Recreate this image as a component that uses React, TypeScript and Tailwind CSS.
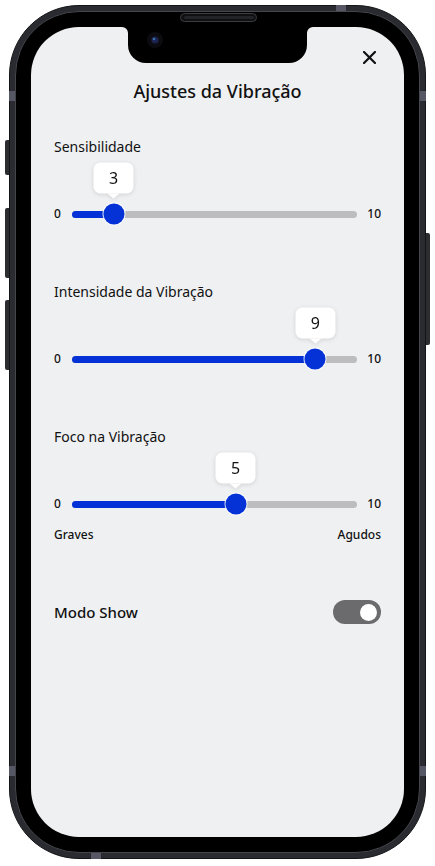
import React from "react";

type SliderItem = {
  label: string;
  value: number;
  pos: number;
  legend?: [string, string];
};

const sliders: SliderItem[] = [
  { label: "Sensibilidade", value: 3, pos: 0.146 },
  { label: "Intensidade da Vibração", value: 9, pos: 0.854 },
  { label: "Foco na Vibração", value: 5, pos: 0.574, legend: ["Graves", "Agudos"] },
];

function Slider({ item }: { item: SliderItem }) {
  const pct = `${item.pos * 100}%`;
  return (
    <div className="flex flex-col">
      <p className="text-[14px] leading-[20px] text-[#111]">{item.label}</p>
      <div className="mt-[46px] flex h-[22px] items-center">
        <span className="w-[18px] text-[12px] font-medium text-[#111]">0</span>
        <div className="relative flex h-[22px] flex-1 items-center">
          <div className="h-[7px] w-full rounded-full bg-[#bdbdbf]" />
          <div className="absolute left-0 h-[7px] rounded-full bg-[#0432d6]" style={{ width: pct }} />
          <div
            className="absolute top-1/2 h-[21px] w-[21px] -translate-x-1/2 -translate-y-1/2 rounded-full bg-[#0432d6] ring-1 ring-white/80"
            style={{ left: pct }}
          >
            <div className="absolute bottom-[31px] left-1/2 -translate-x-1/2 drop-shadow-[0_1px_2px_rgba(0,0,0,0.13)]">
              <div className="flex h-[31px] w-[40px] items-center justify-center rounded-[7px] bg-white pb-[1px] text-[16px] text-[#111]">
                {item.value}
              </div>
              <div className="absolute left-1/2 top-full h-0 w-0 -translate-x-1/2 border-l-[6px] border-r-[6px] border-t-[5px] border-l-transparent border-r-transparent border-t-white" />
            </div>
          </div>
        </div>
        <span className="w-[24px] text-right text-[12px] font-medium text-[#111]">10</span>
      </div>
      {item.legend && (
        <div className="mt-[12px] flex justify-between text-[12px] font-medium leading-[16px] text-[#111]">
          <span>{item.legend[0]}</span>
          <span>{item.legend[1]}</span>
        </div>
      )}
    </div>
  );
}

function Notch() {
  return (
    <svg className="absolute left-[91px] top-0" width="191" height="36" viewBox="0 0 191 36">
      <path
        d="M0 0 A6 6 0 0 1 6 6 V18 A18 18 0 0 0 24 36 H167 A18 18 0 0 0 185 18 V6 A6 6 0 0 1 191 0 Z"
        fill="#000"
      />
      <circle cx="33" cy="13" r="8" fill="#0c0c10" />
      <circle cx="33" cy="13" r="3.6" fill="#1b2350" />
      <circle cx="32" cy="12" r="1.3" fill="#3a6ea8" />
    </svg>
  );
}

export default function App() {
  return (
    <div className="relative h-[866px] w-[435px] overflow-hidden bg-white pl-[9px] pt-[5px] font-['Noto_Sans',sans-serif]">
      {/* side buttons */}
      <div className="absolute left-[5px] top-[140px] h-[35px] w-[4px] rounded-l-[2px] bg-[#2c2d31]" />
      <div className="absolute left-[5px] top-[208px] h-[70px] w-[4px] rounded-l-[2px] bg-[#2c2d31]" />
      <div className="absolute left-[5px] top-[300px] h-[70px] w-[4px] rounded-l-[2px] bg-[#2c2d31]" />
      <div className="absolute left-[426px] top-[233px] h-[112px] w-[4px] rounded-r-[2px] bg-[#2c2d31]" />

      <div className="relative h-[854px] w-[417px] rounded-[70px] border border-[#141517] bg-[#2a2b30] p-[5px]">
        {/* antenna lines */}
        <div className="absolute left-[-1px] top-[85px] h-[10px] w-[6px] bg-[#555764]" />
        <div className="absolute right-[-1px] top-[85px] h-[10px] w-[6px] bg-[#555764]" />
        <div className="absolute left-[-1px] top-[760px] h-[10px] w-[6px] bg-[#555764]" />
        <div className="absolute right-[-1px] top-[760px] h-[10px] w-[6px] bg-[#555764]" />
        <div className="absolute left-[326px] top-[-1px] h-[6px] w-[10px] bg-[#555764]" />
        <div className="absolute bottom-[-1px] left-[81px] h-[6px] w-[10px] bg-[#555764]" />

        <div className="h-full w-full rounded-[64px] border border-[#44464c] bg-black p-[15px]">
          <div className="relative h-full w-full overflow-hidden rounded-[48px] bg-[#eff0f2] px-[23px]">
            <Notch />
            <div className="flex justify-end pr-[5px] pt-[24px]">
              <svg width="13" height="13" viewBox="0 0 13 13">
                <path d="M1 1 L12 12 M12 1 L1 12" stroke="#111" strokeWidth="2.2" strokeLinecap="square" />
              </svg>
            </div>
            <h1 className="mt-[15px] text-center text-[18px] font-medium leading-[24px] text-[#111]">
              Ajustes da Vibração
            </h1>
            <div className="mt-[34px] flex flex-col gap-[57px]">
              {sliders.map((s) => (
                <Slider key={s.label} item={s} />
              ))}
              <div className="flex h-[24px] items-center justify-between">
                <span className="text-[15px] font-medium text-[#111]">Modo Show</span>
                <div className="flex h-[24px] w-[48px] items-center justify-end rounded-full bg-[#6b6b6d] pr-[4px]">
                  <div className="h-[17px] w-[17px] rounded-full bg-white" />
                </div>
              </div>
            </div>
          </div>
        </div>

        {/* speaker */}
        <div className="absolute left-[170px] top-[7px] flex h-[9px] w-[77px] items-center justify-center rounded-full border border-[#3c3d42] bg-[#101012]">
          <div className="h-[3px] w-[70px] rounded-full bg-[#232427]" />
        </div>
      </div>
    </div>
  );
}
